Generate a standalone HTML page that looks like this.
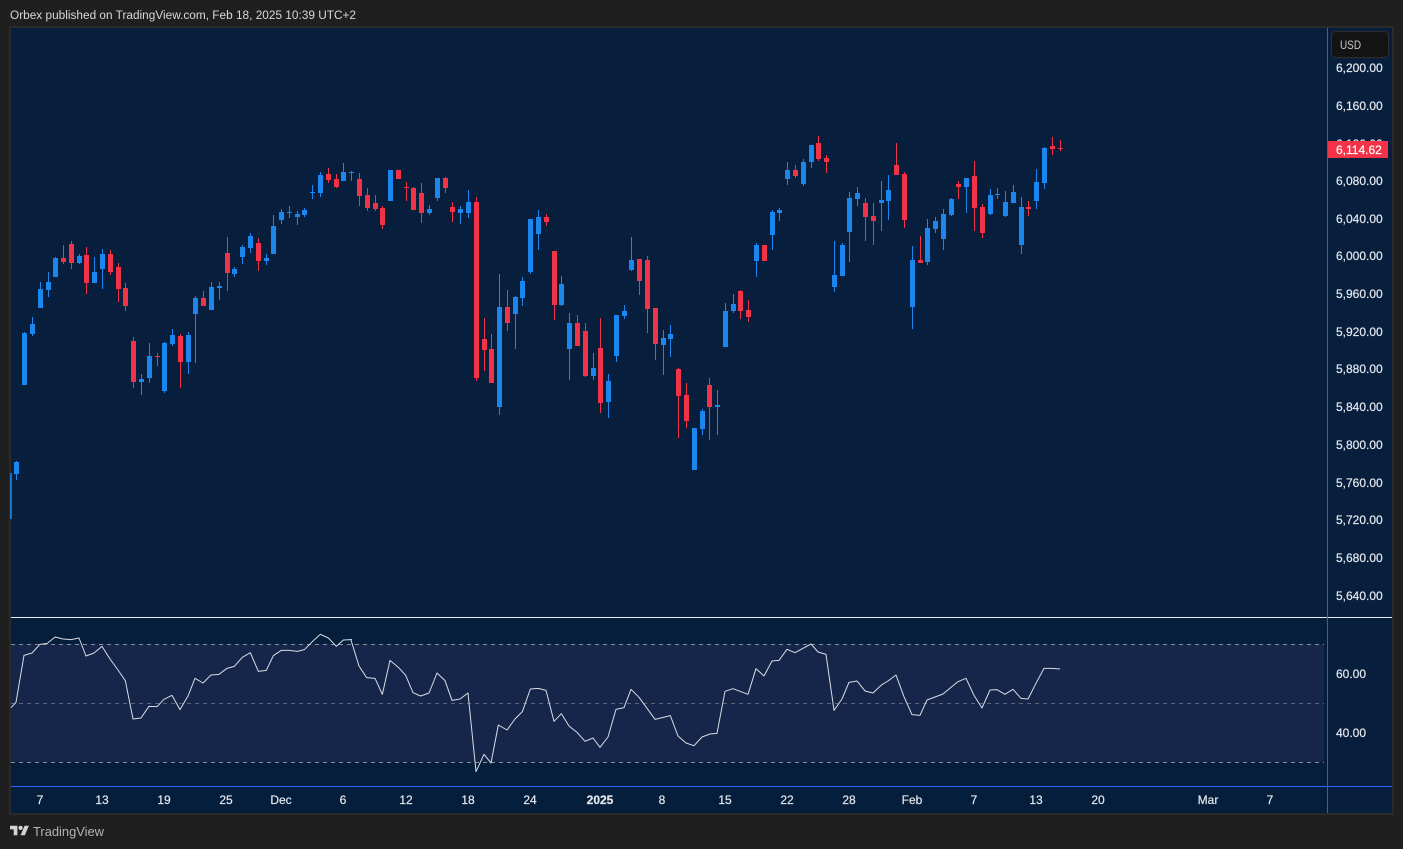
<!DOCTYPE html>
<html lang="en">
<head>
<meta charset="utf-8">
<title>Orbex published on TradingView.com</title>
<style>
html,body{margin:0;padding:0;background:#1f1f1f;width:1403px;height:849px;overflow:hidden}
svg{display:block;position:absolute;left:0;top:0}
text{font-family:"Liberation Sans",sans-serif}
.pr text{font-size:12px;fill:#e4e7ee;stroke:#e4e7ee;stroke-width:.2}
.ta text{font-size:12px;fill:#e4e7ee;text-anchor:middle;stroke:#e4e7ee;stroke-width:.2}
.b{stroke:#1a86ee;fill:none}
.r{stroke:#f23247;fill:none}
.w{stroke-width:3}
.bd{stroke-width:15}
.rsi{fill:none;stroke:#d9dce3;stroke-width:3;stroke-linejoin:round}
</style>
</head>
<body>
<svg width="1403" height="849" viewBox="0 0 1403 849" xmlns="http://www.w3.org/2000/svg">
<rect width="1403" height="849" fill="#1f1f1f"/>
<text x="10" y="19" font-size="11.5" fill="#d6d8dc" textLength="346" lengthAdjust="spacingAndGlyphs">Orbex published on TradingView.com, Feb 18, 2025 10:39 UTC+2</text>

<!-- panel -->
<rect x="9" y="26" width="1385" height="789" fill="#2a2a2b"/>
<rect x="11" y="28" width="1381" height="785" fill="#071f3c"/>
<rect x="11" y="618" width="1381" height="169" fill="#051e3b"/>
<rect x="11" y="644" width="1313" height="118" fill="#16264b"/>
<rect x="11" y="787" width="1381" height="26" fill="#051e3b"/>
<rect x="1328" y="618" width="64" height="195" fill="#071f3c"/>

<!-- RSI guides -->
<g stroke-width="1" fill="none" stroke-dasharray="4 4">
<path d="M11 644.5H1324" stroke="#8b8f98"/>
<path d="M11 703.5H1324" stroke="#5f6577"/>
<path d="M11 762.5H1324" stroke="#8b8f98"/>
</g>

<!-- clipped candles at left edge -->
<rect x="10" y="473" width="2" height="46" fill="#1a73c6"/>
<rect x="14" y="462" width="5" height="12" fill="#1a86ee"/>
<rect x="16" y="461" width="1" height="19" fill="#1a86ee"/>

<!-- candles zoom group 1 -->
<g transform="translate(0 130) scale(.33333)" shape-rendering="crispEdges">
<path class="b w" d="M73 606V765M97 561V618M121 456V534M145 426V501M166 381V441M238 372V402M283 381V459M307 357V477M424 732V795M448 639V759M493 636V789M517 597V648M565 606V732M586 498V699M634 456V540M658 456V510M703 411V441M727 345V402M751 309V369M799 372V405M820 255V372M844 237V282M868 228V264M892 243V285M913 234V261M937 165V207M961 126V201M1030 99V153"/>
<path class="b bd" d="M73 609V765M97 582V612M121 477V534M145 456V480M166 384V441M238 378V399M283 426V459M307 372V417M424 747V756M448 678V744M493 639V783M517 615V642M565 615V696M586 504V552M634 471V540M658 468V474M703 417V432M727 351V381M751 318V354M799 384V393M820 288V372M844 246V270M868 246V249M892 252V261M913 240V255M937 186V189M961 135V189M1030 126V153"/>
<path class="r w" d="M190 345V402M214 333V417M259 351V492M331 360V435M355 399V516M376 459V543M400 621V774M472 669V708M541 612V774M610 483V528M682 321V483M775 324V423M985 114V159M1009 132V174"/>
<path class="r bd" d="M190 384V396M214 342V399M259 375V459M331 372V426M355 411V477M376 474V528M400 633V756M472 678V681M541 618V696M610 504V528M682 369V429M775 339V393M985 132V150M1009 147V171"/>
</g>

<!-- candles zoom group 2 -->
<g transform="translate(340 150) scale(.33333)" shape-rendering="crispEdges">
<path class="b w" d="M34 63V93M151 60V153M268 165V195M292 84V153M361 168V222M385 120V204M478 372V795M526 438V597M547 381V468M571 207V372M595 180V300M664 378V468M688 489V690M760 609V690M805 672V804M829 495V636M853 465V507M874 261V363M970 540V675M991 525V621"/>
<path class="b bd" d="M34 66V69M151 60V153M268 177V189M292 84V144M361 177V189M385 156V189M478 471V771M526 441V492M547 393V444M571 207V366M595 201V252M664 402V465M688 519V597M760 654V678M805 693V756M829 495V618M853 483V498M874 330V360M970 564V585M991 552V567"/>
<path class="r w" d="M58 69V168M82 114V183M106 135V183M127 168V237M175 60V87M199 96V153M220 111V180M244 99V219M316 81V129M337 156V216M409 141V693M433 504V663M454 552V699M502 420V543M619 192V228M643 303V510M712 495V588M736 519V681M781 504V789M898 327V435M922 318V549M946 474V630"/>
<path class="r bd" d="M58 87V138M82 135V174M106 159V177M127 174V225M175 60V87M199 111V114M220 114V180M244 129V189M316 84V114M337 171V186M409 156V684M433 567V600M454 597V699M502 471V519M619 201V216M643 303V465M712 519V588M736 543V678M781 594V759M898 327V393M922 330V477M946 474V582"/>
</g>

<!-- candles zoom group 3 -->
<g transform="translate(660 200) scale(.33333)" shape-rendering="crispEdges">
<path class="b w" d="M103 684V810M127 627V705M172 570V705M196 309V441M220 282V339M289 129V231M337 30V150M358 24V63"/>
<path class="b bd" d="M103 684V810M127 633V687M172 615V621M196 333V441M220 312V333M289 135V183M337 36V105M358 30V39"/>
<path class="r w" d="M55 504V714M79 549V684M148 534V720M241 270V357M265 300V366M313 135V183"/>
<path class="r bd" d="M55 507V588M79 585V663M148 555V621M241 273V333M265 330V351M313 135V183"/>
</g>

<!-- candles zoom group 4 -->
<g transform="translate(760 125) scale(.33333)" shape-rendering="crispEdges">
<path class="b w" d="M82 111V180M130 102V183M154 60V129M223 348V501M247 354V453M268 201V411M292 186V243M364 168V318M385 150V285M457 363V612M502 282V420M526 276V324M550 252V375M574 219V273M619 159V264M691 192V270M712 189V222M736 198V276M760 180V234M784 216V387M829 132V252M853 66V192"/>
<path class="b bd" d="M82 135V162M130 111V177M154 60V111M223 450V486M247 360V453M268 219V321M292 204V222M364 225V234M385 195V228M457 405V546M502 309V411M526 288V312M550 267V342M574 222V270M619 159V186M691 210V267M712 207V210M736 231V273M760 201V234M784 246V360M829 171V228M853 69V174"/>
<path class="r w" d="M106 120V159M175 33V108M199 90V144M316 219V348M340 234V360M409 54V150M433 141V309M481 333V414M595 168V222M643 108V318M667 237V339M805 228V273M877 36V90M901 45V78"/>
<path class="r bd" d="M106 135V153M175 54V102M199 99V111M316 234V276M340 273V288M409 120V150M433 147V285M481 405V414M595 177V186M643 153V249M667 246V324M805 246V252M877 63V72M901 69V72"/>
</g>

<!-- RSI line -->
<g transform="translate(0 610) scale(.33333)">
<polyline class="rsi" points="33,293 48,277 72,136 96,129 120,103 142,100 165,81 189,87 213,89 237,84 258,138 282,129 306,109 330,147 354,180 376,212 399,327 423,324 447,289 471,290 492,268 516,256 540,299 564,258 585,205 609,219 633,195 657,193 681,175 703,169 727,142 751,128 775,184 799,181 820,137 844,121 868,121 892,124 913,119 937,95 961,73 985,84 1009,109 1030,90 1056,89"/>
</g>
<g transform="translate(350 620) scale(.33333)">
<polyline class="rsi" points="2,57 27,138 50,173 75,175 97,223 120,121 145,142 167,166 189,218 212,228 237,219 261,159 285,182 306,241 330,237 354,219 378,455 402,403 423,429 445,315 471,330 495,297 517,275 541,207 565,205 588,211 612,304 634,281 657,318 681,337 705,364 729,354 750,382 774,351 798,268 822,263 843,208 867,232 889,262 915,298 937,293 961,287 984,348 1008,369 1032,377 1056,351 1080,342"/>
</g>
<g transform="translate(710 620) scale(.33333)">
<polyline class="rsi" points="0,342 21,340 45,214 69,206 93,215 114,223 138,146 162,168 186,123 207,121 231,88 255,98 279,85 303,72 324,96 348,103 372,271 396,237 417,187 441,183 465,213 489,219 513,196 534,183 558,165 582,230 606,284 630,286 651,240 675,231 699,222 723,202 744,185 768,175 792,226 816,264 840,210 861,209 885,223 909,208 933,235 954,237 978,190 1002,145 1026,145 1050,147"/>
</g>

<!-- separators -->
<rect x="11" y="617" width="1381" height="1" fill="#e8ecf4"/>
<rect x="11" y="786" width="1381" height="1" fill="#2962ff"/>
<rect x="1327" y="28" width="1" height="785" fill="#2a5fd6"/>

<!-- USD -->
<rect x="1331.5" y="31.5" width="57" height="26" rx="4" fill="#131313" stroke="#2f2f30"/>
<text x="1340" y="49" font-size="12" fill="#c5c8ce" textLength="21" lengthAdjust="spacingAndGlyphs">USD</text>

<!-- price axis -->
<g class="pr">
<text x="1336" y="72">6,200.00</text>
<text x="1336" y="110">6,160.00</text>
<text x="1336" y="148">6,120.00</text>
<text x="1336" y="185">6,080.00</text>
<text x="1336" y="223">6,040.00</text>
<text x="1336" y="260">6,000.00</text>
<text x="1336" y="298">5,960.00</text>
<text x="1336" y="336">5,920.00</text>
<text x="1336" y="373">5,880.00</text>
<text x="1336" y="411">5,840.00</text>
<text x="1336" y="449">5,800.00</text>
<text x="1336" y="487">5,760.00</text>
<text x="1336" y="524">5,720.00</text>
<text x="1336" y="562">5,680.00</text>
<text x="1336" y="600">5,640.00</text>
<text x="1336" y="678">60.00</text>
<text x="1336" y="737">40.00</text>
</g>
<rect x="1328" y="141" width="60" height="17" fill="#f23247"/>
<text x="1336" y="154" font-size="12" fill="#fff" stroke="#fff" stroke-width=".2">6,114.62</text>

<!-- time axis -->
<g class="ta">
<text x="40" y="804">7</text>
<text x="102" y="804">13</text>
<text x="164" y="804">19</text>
<text x="226" y="804">25</text>
<text x="281" y="804">Dec</text>
<text x="343" y="804">6</text>
<text x="406" y="804">12</text>
<text x="468" y="804">18</text>
<text x="530" y="804">24</text>
<text x="600" y="804" font-weight="bold">2025</text>
<text x="662" y="804">8</text>
<text x="725" y="804">15</text>
<text x="787" y="804">22</text>
<text x="849" y="804">28</text>
<text x="912" y="804">Feb</text>
<text x="974" y="804">7</text>
<text x="1036" y="804">13</text>
<text x="1098" y="804">20</text>
<text x="1208" y="804">Mar</text>
<text x="1270" y="804">7</text>
</g>

<!-- TradingView logo -->
<g transform="translate(10 823.6) scale(.53)" fill="#d4d4d4">
<path d="M14 22H7V11H0V4h14v18zM28 22h-8l7.5-18h8L28 22z"/>
<circle cx="20" cy="8" r="4"/>
</g>
<text x="33" y="836" font-size="13" fill="#b4b4b4" textLength="71" lengthAdjust="spacingAndGlyphs">TradingView</text>
</svg>
</body>
</html>
